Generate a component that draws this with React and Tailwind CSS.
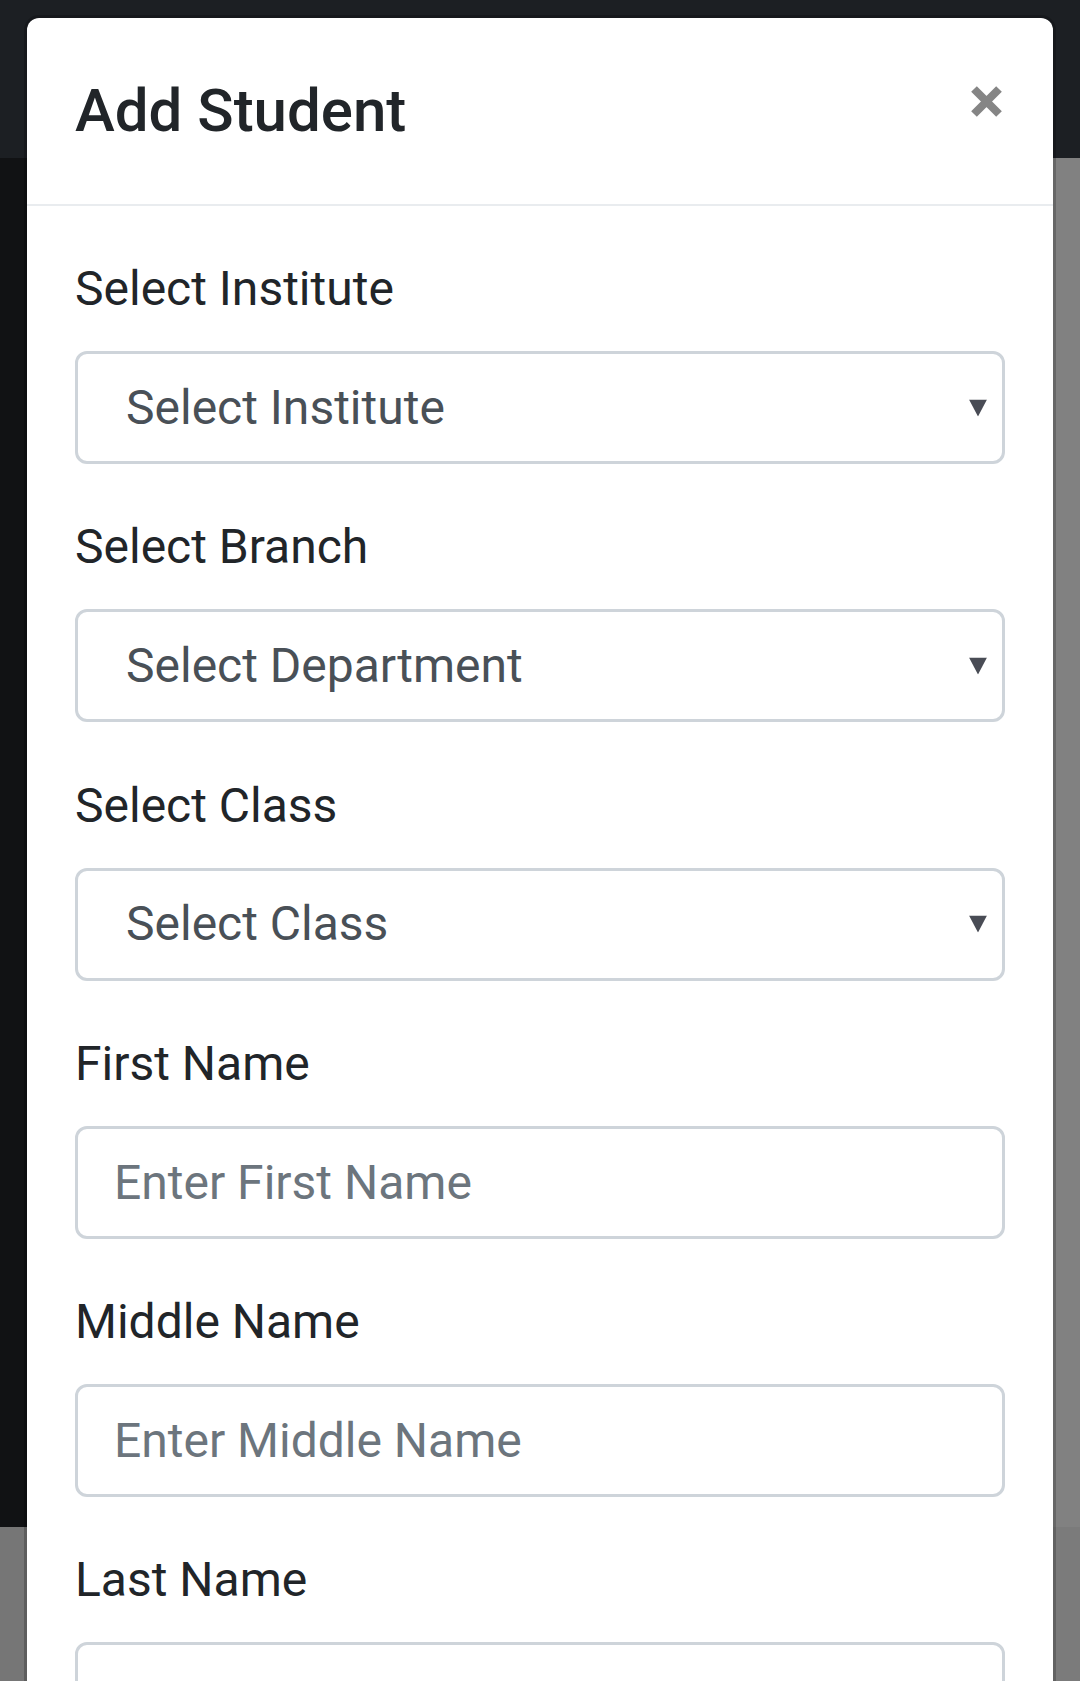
import React from 'react';

const fields = [
    { label: 'Select Institute', kind: 'select', text: 'Select Institute' },
    { label: 'Select Branch', kind: 'select', text: 'Select Department' },
    { label: 'Select Class', kind: 'select', text: 'Select Class' },
    { label: 'First Name', kind: 'input', text: 'Enter First Name' },
    { label: 'Middle Name', kind: 'input', text: 'Enter Middle Name' },
    { label: 'Last Name', kind: 'input', text: 'Enter Last Name' },
];

const Caret = () => (
    <svg width="18" height="17" viewBox="0 0 18 17" className="absolute right-[18px] top-1/2 -translate-y-1/2 pointer-events-none">
        <polygon points="0,0 18,0 9,17" fill="#494c55" />
    </svg>
);

const App = () => {
    return (
        <div className="relative w-full h-[1681px] overflow-hidden font-['Roboto',sans-serif] flex flex-col">
            {/* page behind the backdrop */}
            <div className="h-[158px] bg-[#1c1f23]"></div>
            <div className="h-[1369px] flex">
                <div className="w-1/2 bg-[#111214]"></div>
                <div className="w-1/2 bg-[#818181]"></div>
            </div>
            <div className="flex-1 flex">
                <div className="w-1/2 bg-[#767676]"></div>
                <div className="w-1/2 bg-[#7b7b7b]"></div>
            </div>

            {/* modal */}
            <div className="absolute top-[15px] left-[24px] right-[24px] bg-white bg-clip-padding border-[3px] border-black/20 rounded-[15px]">
                <div className="flex items-start justify-between px-[48px] pt-[48px] pb-[48px] border-b-2 border-[#e9ecef]">
                    <h5 className="text-[60px] leading-[90px] font-medium text-[#212529]">Add Student</h5>
                    <button type="button" className="mt-[19px] mr-[2px]">
                        <svg width="33" height="33" viewBox="0 0 33 33">
                            <path d="M4 4 L29 29 M29 4 L4 29" stroke="#858585" strokeWidth="8" strokeLinecap="butt" />
                        </svg>
                    </button>
                </div>

                <div className="px-[48px] pt-[47px]">
                    {fields.map((f, idx) => (
                        <div key={idx} className="mb-[47.3px]">
                            <label className="block text-[48px] leading-[72px] text-[#212529] mb-[26px]">{f.label}</label>
                            {f.kind === 'select' ? (
                                <div className="relative h-[113px]">
                                    <select className="w-full h-full appearance-none bg-white border-[3px] border-[#ced4da] rounded-[12px] pl-[48px] pr-[60px] text-[48px] text-[#495057] font-['Roboto',sans-serif] outline-none">
                                        <option>{f.text}</option>
                                    </select>
                                    <Caret />
                                </div>
                            ) : (
                                <input
                                    type="text"
                                    placeholder={f.text}
                                    className="block w-full h-[113px] bg-white border-[3px] border-[#ced4da] rounded-[12px] px-[36px] text-[48px] text-[#495057] placeholder:text-[#6c757d] font-['Roboto',sans-serif] outline-none"
                                />
                            )}
                        </div>
                    ))}
                </div>
            </div>
        </div>
    );
};

export default App;
